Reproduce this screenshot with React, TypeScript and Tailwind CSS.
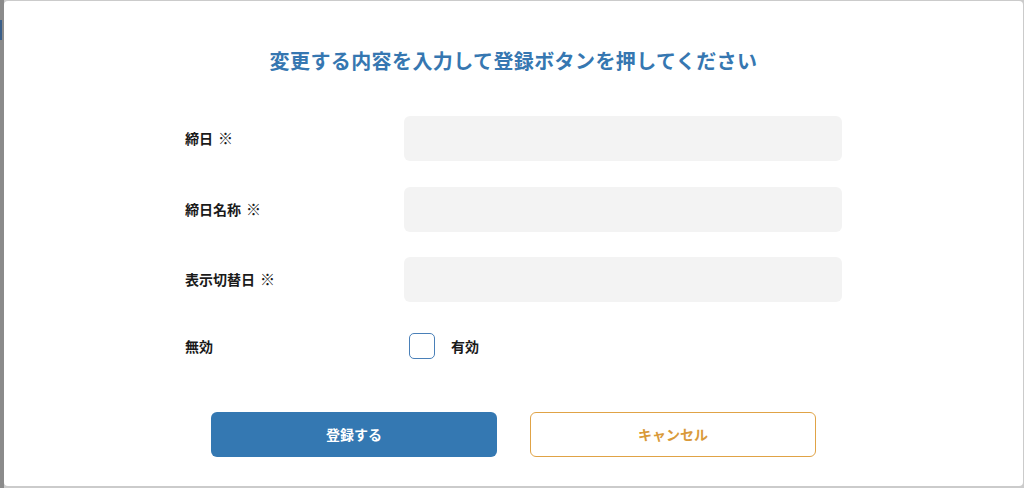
import React from "react";

const fields = ["締日", "締日名称", "表示切替日"];

export default function App() {
  return (
    <div
      className="flex h-[488px] w-full bg-[#cbcbcb]"
      style={{ fontFamily: '"Noto Sans CJK JP", "Noto Sans", sans-serif' }}
    >
      {/* backdrop strip of the page behind */}
      <div className="flex w-[4px] flex-col bg-[#8b8b8b]">
        <div className="mt-[20px] h-[20px] w-[2px] bg-[#3a5f8a]" />
      </div>

      {/* modal */}
      <div className="mb-[2px] mr-[1px] mt-[1px] flex flex-1 flex-col items-center rounded-[4px] bg-white">
        <h2 className="mt-[45px] h-[30px] text-[20px] font-bold leading-[30px] tracking-[0.4px] text-[#3677b1]">
          変更する内容を入力して登録ボタンを押してください
        </h2>

        <div className="mt-[40px] flex w-[657px] flex-col gap-[25.5px]">
          {fields.map((label) => (
            <div key={label} className="flex items-center">
              <span className="w-[219px] text-[14px] font-bold text-[#1a1a1a]">
                {label}
                <span className="ml-[5px] text-[15px]">※</span>
              </span>
              <input
                type="text"
                className="h-[45px] w-[438px] rounded-[6px] bg-[#f3f3f3] px-3 text-[14px] outline-none"
              />
            </div>
          ))}
        </div>

        <div className="mt-[31px] flex h-[26px] w-[657px] items-center">
          <span className="w-[219px] text-[14px] font-bold text-[#1a1a1a]">無効</span>
          <label className="ml-[5px] flex items-center gap-[16px]">
            <span className="h-[26px] w-[26px] rounded-[5px] border-[1.5px] border-[#4a80b8] bg-white" />
            <span className="text-[14px] font-bold text-[#1a1a1a]">有効</span>
          </label>
        </div>

        <div className="mt-[53px] flex gap-[33px]">
          <button className="h-[45px] w-[286px] rounded-[6px] bg-[#3478b2] text-[14px] font-bold text-white">
            登録する
          </button>
          <button className="h-[45px] w-[286px] rounded-[6px] border border-[#e0a346] bg-white text-[14px] font-bold text-[#d99a3a]">
            キャンセル
          </button>
        </div>
      </div>
    </div>
  );
}
